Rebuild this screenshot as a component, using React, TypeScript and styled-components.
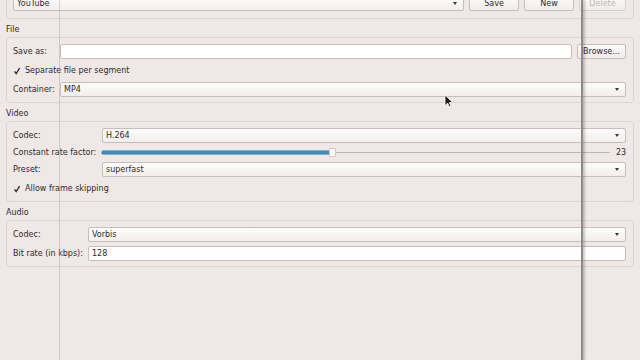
import styled, { createGlobalStyle } from "styled-components";

const colors = {
  bg: "#efe8e6",
  text: "#2e2a29",
  border: "#c5bebc",
  groupBorder: "#ddd5d3",
  disabled: "#bbb4b2",
  accent: "#3b8cbf",
};

const GlobalStyle = createGlobalStyle`
  html, body {
    margin: 0;
    padding: 0;
    background: ${colors.bg};
    overflow: hidden;
  }
  body {
    font-family: "DejaVu Sans", "Noto Sans", sans-serif;
    font-size: 8px;
    color: ${colors.text};
  }
`;

const Page = styled.div`
  position: relative;
  width: 640px;
  height: 360px;
  padding: 0 6px;
  box-sizing: border-box;
  overflow: hidden;
`;

const GroupBox = styled.div<{ $top?: boolean }>`
  border: 1px solid ${colors.groupBorder};
  border-radius: 3px;
  padding: 6px 7px ${(p) => (p.$top ? "7px" : "5px")} 6px;
  margin-top: ${(p) => (p.$top ? "-11px" : "0")};
  display: flex;
  flex-direction: column;
  gap: 4px;
`;

const SectionTitle = styled.div`
  padding: 5px 0 2px;
  line-height: 11px;
`;

const Row = styled.div<{ $label: number; $h?: number }>`
  display: grid;
  grid-template-columns: ${(p) => `${p.$label}px 1fr`};
  align-items: center;
  height: ${(p) => (p.$h ? `${p.$h}px` : "15px")};
`;

const Inline = styled.div`
  display: flex;
  align-items: center;
  gap: 5px;
`;

const Label = styled.span`
  white-space: nowrap;
  line-height: 11px;
`;

const Field = styled.div`
  flex: 1;
  height: 15px;
  box-sizing: border-box;
  border: 1px solid ${colors.border};
  border-radius: 2px;
  background: #fff;
  padding: 0 3px;
  line-height: 13px;
  white-space: nowrap;
`;

const ComboBox = styled(Field)`
  position: relative;
  background: linear-gradient(#fdfcfc, #f1eeec);
  &::after {
    content: "";
    position: absolute;
    right: 6px;
    top: 5px;
    border-left: 2.5px solid transparent;
    border-right: 2.5px solid transparent;
    border-top: 3px solid #3a3534;
  }
`;

const Button = styled.div<{ $w: number; $disabled?: boolean }>`
  width: ${(p) => p.$w}px;
  height: 15px;
  box-sizing: border-box;
  border: 1px solid ${(p) => (p.$disabled ? "#d6cfcd" : colors.border)};
  border-radius: 2px;
  background: linear-gradient(#fcfbfb, #efebe9);
  color: ${(p) => (p.$disabled ? colors.disabled : colors.text)};
  text-align: center;
  line-height: 13px;
  flex-shrink: 0;
`;

const CheckRow = styled.div`
  display: flex;
  align-items: center;
  gap: 4px;
  height: 15px;
`;

const CheckBox = styled.span`
  width: 8px;
  height: 8px;
  display: inline-flex;
  align-items: center;
  justify-content: center;
`;

const SliderRow = styled.div`
  display: flex;
  align-items: center;
  gap: 6px;
  height: 11px;
`;

const Track = styled.div`
  position: relative;
  flex: 1;
  height: 11px;
  &::before {
    content: "";
    position: absolute;
    left: 0;
    right: 0;
    top: 5px;
    height: 1px;
    background: #bdb6b4;
  }
`;

const Fill = styled.div`
  position: absolute;
  left: 0;
  top: 4px;
  height: 3px;
  border-radius: 1px;
  background: ${colors.accent};
  box-shadow: 0 0 0 0.5px #2f6f98;
`;

const Handle = styled.div`
  position: absolute;
  top: 1px;
  width: 7px;
  height: 9px;
  box-sizing: border-box;
  margin-left: -3px;
  border: 1px solid #d9c3c6;
  border-radius: 1px;
  background: #fff;
`;

const Value = styled.span`
  width: 10px;
  text-align: right;
`;

const Overlay = styled.div`
  position: absolute;
  left: 59px;
  top: 0;
  width: 521px;
  height: 360px;
  border-left: 1px solid rgba(150, 140, 138, 0.35);
  border-right: 2px solid #8f8988;
  box-shadow: 2px 0 2px rgba(60, 50, 50, 0.25);
  pointer-events: none;
`;

const Cursor = styled.svg`
  position: absolute;
  left: 444px;
  top: 94px;
`;

function Check() {
  return (
    <CheckBox>
      <svg width="8" height="8" viewBox="0 0 8 8">
        <path d="M1.5 4.3 L3.2 6.5 L6.6 1.2" fill="none" stroke="#2e2a29" strokeWidth="1.3" />
      </svg>
    </CheckBox>
  );
}

export default function App() {
  const crf = 23;
  const ratio = 0.453;
  return (
    <>
      <GlobalStyle />
      <Page>
        <GroupBox $top>
          <Inline>
            <ComboBox>YouTube</ComboBox>
            <Button $w={50}>Save</Button>
            <Button $w={50}>New</Button>
            <Button $w={47} $disabled>
              Delete
            </Button>
          </Inline>
        </GroupBox>

        <SectionTitle>File</SectionTitle>
        <GroupBox>
          <Row $label={47}>
            <Label>Save as:</Label>
            <Inline>
              <Field />
              <Button $w={49}>Browse...</Button>
            </Inline>
          </Row>
          <CheckRow>
            <Check />
            <span>Separate file per segment</span>
          </CheckRow>
          <Row $label={47}>
            <Label>Container:</Label>
            <ComboBox>MP4</ComboBox>
          </Row>
        </GroupBox>

        <SectionTitle>Video</SectionTitle>
        <GroupBox>
          <Row $label={89}>
            <Label>Codec:</Label>
            <ComboBox>H.264</ComboBox>
          </Row>
          <Row $label={89} $h={11}>
            <Label>Constant rate factor:</Label>
            <SliderRow>
              <Track>
                <Fill style={{ width: `${ratio * 100}%` }} />
                <Handle style={{ left: `${ratio * 100}%` }} />
              </Track>
              <Value>{crf}</Value>
            </SliderRow>
          </Row>
          <Row $label={89}>
            <Label>Preset:</Label>
            <ComboBox>superfast</ComboBox>
          </Row>
          <CheckRow>
            <Check />
            <span>Allow frame skipping</span>
          </CheckRow>
        </GroupBox>

        <SectionTitle>Audio</SectionTitle>
        <GroupBox>
          <Row $label={75}>
            <Label>Codec:</Label>
            <ComboBox>Vorbis</ComboBox>
          </Row>
          <Row $label={75}>
            <Label>Bit rate (in kbps):</Label>
            <Field>128</Field>
          </Row>
        </GroupBox>

        <Overlay />
        <Cursor width="10" height="14" viewBox="0 0 10 14">
          <path d="M1 1 L1 11.5 L3.6 9.2 L5.4 13 L7 12.3 L5.3 8.6 L8.8 8.6 Z" fill="#1c1a1a" stroke="#fff" strokeWidth="0.8" />
        </Cursor>
      </Page>
    </>
  );
}
